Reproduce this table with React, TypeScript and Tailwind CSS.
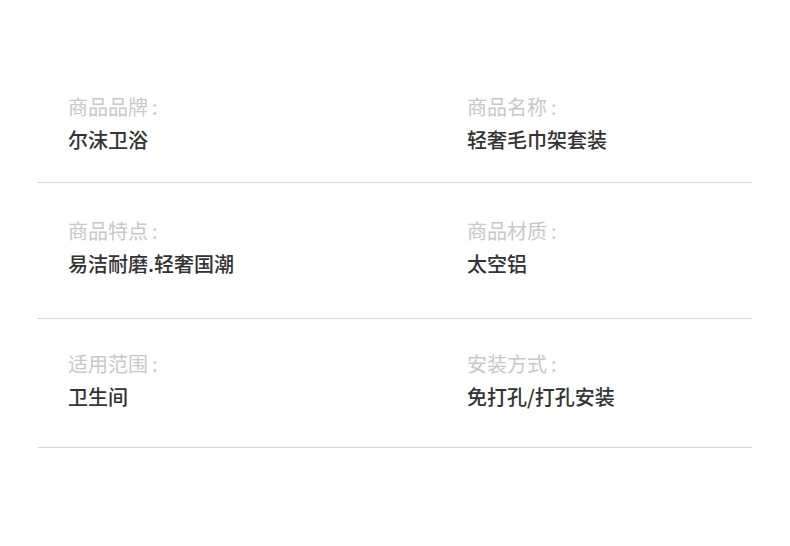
export default function App() {
  const rows = [
    { a: ["商品品牌", "尔沫卫浴"], b: ["商品名称", "轻奢毛巾架套装"], pt: "pt-[90px]", pb: "pb-[26px]" },
    { a: ["商品特点", "易洁耐磨.轻奢国潮"], b: ["商品材质", "太空铝"], pt: "pt-[31px]", pb: "pb-[38px]" },
    { a: ["适用范围", "卫生间"], b: ["安装方式", "免打孔/打孔安装"], pt: "pt-[28px]", pb: "pb-[34px]" },
  ];
  return (
    <div
      className="w-[790px] h-[546px] bg-white px-[38px]"
      style={{ fontFamily: '"Noto Sans CJK SC", "Noto Sans", sans-serif' }}
    >
      {rows.map((r, i) => (
        <div key={i} className={`grid grid-cols-[429px_1fr] border-b border-[#d6d6d6] ${r.pt} ${r.pb}`}>
          {[r.a, r.b].map((c, j) => (
            <div key={j} className={j === 0 ? "pl-[30px]" : ""}>
              <div className="text-[20px] leading-[33px] text-[#c8c8c8]">
                {c[0]}
                <span className="ml-[4px]">:</span>
              </div>
              <div className="text-[20px] leading-[33px] font-medium text-[#333333]">{c[1]}</div>
            </div>
          ))}
        </div>
      ))}
    </div>
  );
}
